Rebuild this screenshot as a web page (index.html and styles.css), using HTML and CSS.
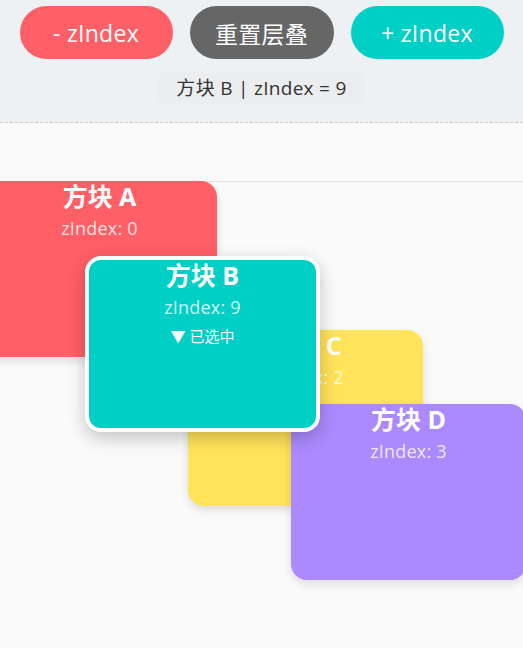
FILE: index.html
```html
<!DOCTYPE html>
<html lang="zh">

<head>
	<meta charset="UTF-8">
	<meta name="viewport" content="width=device-width, initial-scale=1.0">
	<title>zIndex 层叠</title>
	<link rel="stylesheet" href="styles.css">
</head>

<body>
	<div class="toolbar">
		<div class="buttons">
			<button class="btn btn-down">- zIndex</button>
			<button class="btn btn-reset">重置层叠</button>
			<button class="btn btn-up">+ zIndex</button>
		</div>
		<div class="status">方块 B | zIndex = 9</div>
	</div>

	<div class="stage">
		<div class="canvas">
			<div class="block block-a">
				<div class="block-title">方块 A</div>
				<div class="block-z">zIndex: 0</div>
			</div>
			<div class="block block-c">
				<div class="block-title">方块 C</div>
				<div class="block-z">zIndex: 2</div>
			</div>
			<div class="block block-d">
				<div class="block-title">方块 D</div>
				<div class="block-z">zIndex: 3</div>
			</div>
			<div class="block block-b selected">
				<div class="block-title">方块 B</div>
				<div class="block-z">zIndex: 9</div>
				<div class="block-mark">▼ 已选中</div>
			</div>
		</div>
	</div>
</body>

</html>
```

FILE: styles.css
```css
body {
	margin: 0;
	font-family: "Open Sans", "Noto Sans CJK SC", sans-serif;
	background-color: #fafafa;
	overflow: hidden;
	height: 648px;
}

.toolbar {
	background-color: #eef1f4;
	height: 122px;
	border-bottom: 1px dashed #cfcfcf;
	display: flex;
	flex-direction: column;
	align-items: center;
}

.buttons {
	display: flex;
	gap: 17px;
	padding-top: 6px;
}

.btn {
	height: 53px;
	border: none;
	border-radius: 27px;
	color: white;
	font-family: "Open Sans", "Noto Sans CJK SC", sans-serif;
	font-size: 23px;
	letter-spacing: 0.3px;
	padding: 0;
}

.btn-down {
	width: 153px;
	background-color: #ff5f66;
}

.btn-reset {
	width: 144px;
	background-color: #666666;
}

.btn-up {
	width: 153px;
	background-color: #00cfc6;
}

.status {
	margin-top: 13px;
	width: 207px;
	height: 33px;
	line-height: 33px;
	text-align: center;
	background-color: #ebedef;
	border-radius: 8px;
	font-size: 19px;
	letter-spacing: 0.3px;
	color: #333;
}

.stage {
	padding-top: 58px;
}

.canvas {
	position: relative;
	border-top: 1px solid #e2e2e2;
	height: 470px;
}

.block {
	position: absolute;
	box-sizing: border-box;
	width: 235px;
	height: 176px;
	border-radius: 16px;
	text-align: center;
	color: white;
	box-shadow: 0 4px 10px rgba(0, 0, 0, 0.12);
}

.block-title {
	font-size: 25px;
	font-weight: bold;
	line-height: 30px;
}

.block-z {
	margin-top: 5px;
	font-size: 18px;
	line-height: 24px;
	letter-spacing: 0.2px;
	color: rgba(255, 255, 255, 0.82);
}

.block-mark {
	margin-top: 7px;
	font-size: 15px;
	line-height: 20px;
}

.block-a {
	left: -18px;
	top: -1px;
	background-color: #ff5f66;
}

.block-b {
	left: 85px;
	top: 74px;
	background-color: #00cfc6;
}

.block-c {
	left: 188px;
	top: 148px;
	background-color: #ffe35a;
}

.block-d {
	left: 291px;
	top: 222px;
	background-color: #aa8afd;
}

.selected {
	border: 4px solid white;
	box-shadow: 0 6px 18px rgba(0, 0, 0, 0.22);
}
```
